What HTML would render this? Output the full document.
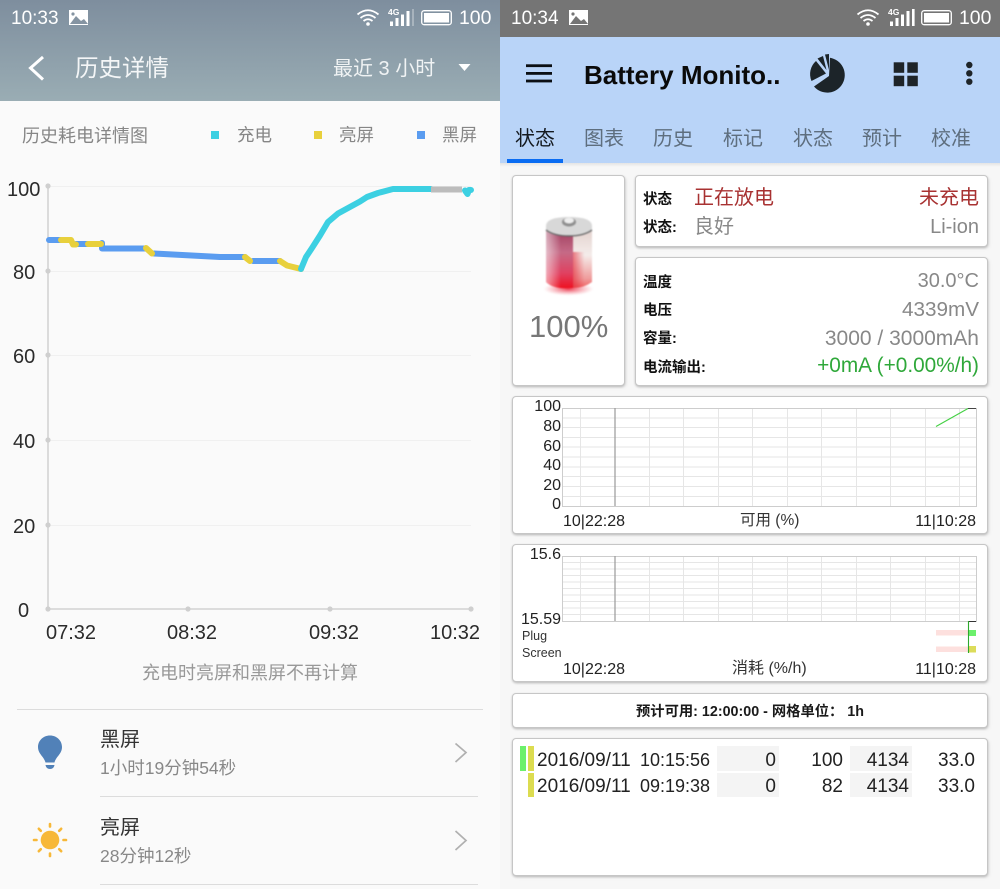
<!DOCTYPE html>
<html><head><meta charset="utf-8">
<style>
*{margin:0;padding:0;box-sizing:border-box}
html,body{width:1000px;height:889px;overflow:hidden;background:#fafafa}
body{position:relative;font-family:"Liberation Sans","Noto Sans CJK SC",sans-serif;filter:blur(.35px)}
.t{position:absolute;white-space:nowrap;line-height:1}
.r{text-align:right}
.b{position:absolute}
.card{position:absolute;background:#fff;border:1px solid #c6c6c6;border-radius:4px;box-shadow:0 1px 2px rgba(0,0,0,.22),2px 2px 3px rgba(0,0,0,.05)}
.lab{font-weight:bold;font-size:14.5px;color:#111}
svg{position:absolute;overflow:visible}
</style></head><body>

<!-- LEFT -->
<div class="b" style="left:0;top:0;width:500px;height:889px;background:#fafafa"></div>
<div class="b" style="left:0;top:0;width:500px;height:101px;background:linear-gradient(#7e8e9e,#9aadb4)"></div>
<div class="t" style="left:11px;top:9px;font-size:19px;color:#fff">10:33</div>
<div class="t" style="left:459px;top:9px;font-size:19.4px;color:#fff">100</div>

<svg style="left:0;top:0" width="500" height="36">
<rect x="69" y="10" width="19" height="15" fill="#fff"/><path d="M70 24l6-8 5 5 3-2 4 5z" fill="#8594a2"/><circle cx="73" cy="14" r="1.6" fill="#8594a2"/>
<g fill="none" stroke="#fff" stroke-width="1.8"><path d="M357.500 14.500q10.500-8.500 21 0M360.500 18q7.500-6 15 0M363.500 21q4.500-3.500 9 0"/></g><circle cx="368" cy="24" r="1.800" fill="#fff"/>
<text x="388" y="15" font-size="8.500" font-weight="bold" fill="#fff" font-family="Liberation Sans">4G</text>
<g fill="#fff"><rect x="390" y="21.500" width="3" height="4.500"/><rect x="395.500" y="18" width="3" height="8"/><rect x="401" y="14.500" width="3" height="11.500"/><rect x="406.500" y="11" width="3" height="15"/><rect x="412" y="9" width="2" height="17" opacity=".3"/></g>
<rect x="421.700" y="10.700" width="29.600" height="14" rx="2.500" fill="none" stroke="#fff" stroke-width="1.300"/><rect x="424" y="13" width="25" height="9.500" fill="#fff"/>
</svg>

<svg style="left:0;top:0" width="500" height="101">
<path d="M43 57L30.500 68 43 79.500" fill="none" stroke="#fff" stroke-width="3"/>
<path d="M458.500 64h12l-6 7z" fill="#fff"/>
</svg>
<div class="t" style="left:75px;top:57px;font-size:23.500px;color:#f4f6f7">历史详情</div>
<div class="t" style="left:333px;top:59px;font-size:20px;color:#f0f3f4">最近 3 小时</div>

<div class="t" style="left:22px;top:127px;font-size:18px;color:#868686">历史耗电详情图</div>
<div class="b" style="left:211px;top:131px;width:8px;height:8px;background:#3cd0e2"></div>
<div class="t" style="left:237px;top:127px;font-size:17.500px;color:#868686">充电</div>
<div class="b" style="left:314px;top:131px;width:8px;height:8px;background:#e8d03c"></div>
<div class="t" style="left:339px;top:127px;font-size:17.500px;color:#868686">亮屏</div>
<div class="b" style="left:417px;top:131px;width:8px;height:8px;background:#5a9cf0"></div>
<div class="t" style="left:442px;top:127px;font-size:17.500px;color:#868686">黑屏</div>

<svg style="left:0;top:0" width="500" height="700">
<g stroke="#f0f0f0" stroke-width="1"><path d="M48 186.500H471M48 271.500H471M48 355.500H471M48 440.500H471M48 525.500H471"/></g>
<path d="M48 186V609H471" fill="none" stroke="#d8d8d8" stroke-width="1.800"/>
<g fill="#cfcfcf"><circle cx="48" cy="186" r="2.600"/><circle cx="48" cy="271" r="2.600"/><circle cx="48" cy="355" r="2.600"/><circle cx="48" cy="440" r="2.600"/><circle cx="48" cy="525" r="2.600"/><circle cx="48" cy="609" r="2.600"/><circle cx="188" cy="609" r="2.600"/><circle cx="330" cy="609" r="2.600"/><circle cx="471" cy="609" r="2.600"/></g>
<g fill="none" stroke-width="6" stroke-linecap="round" stroke-linejoin="round">
<path stroke="#5a9cf0" d="M49 240H61M76 244H88M102 243V248.500H146M154 253.500L220 257H245M253 261H280"/>
<path stroke="#e8d03c" d="M61 240H71L73 244.500H76M88 244H101M146 248L152 253.500M245 257L250 261M280 261L287 265.500 301 269"/>
<path stroke="#3cd0e2" d="M301 269L306 257 312 248 320 235.500 328 222 338 213.500 360 201.500 367 197 378 193 393 189H431"/>
<path stroke="#bcbcbc" stroke-linecap="butt" d="M431 189.500H462"/>
<path stroke="#3cd0e2" d="M465 190.500L467.500 194 469 190 471 190"/>
</g>
</svg>

<div class="t" style="left:7px;top:179.500px;font-size:20px;color:#2b2b2b">100</div>
<div class="t" style="left:13px;top:262.500px;font-size:20px;color:#2b2b2b">80</div>
<div class="t" style="left:13px;top:346.500px;font-size:20px;color:#2b2b2b">60</div>
<div class="t" style="left:13px;top:431.500px;font-size:20px;color:#2b2b2b">40</div>
<div class="t" style="left:13px;top:516.500px;font-size:20px;color:#2b2b2b">20</div>
<div class="t" style="left:18px;top:600.500px;font-size:20px;color:#2b2b2b">0</div>
<div class="t" style="left:46px;top:623px;font-size:20px;color:#2b2b2b">07:32</div>
<div class="t" style="left:167px;top:623px;font-size:20px;color:#2b2b2b">08:32</div>
<div class="t" style="left:309px;top:623px;font-size:20px;color:#2b2b2b">09:32</div>
<div class="t" style="left:430px;top:623px;font-size:20px;color:#2b2b2b">10:32</div>
<div class="t" style="left:142px;top:664px;font-size:18px;color:#989898">充电时亮屏和黑屏不再计算</div>

<div class="b" style="left:17px;top:709px;width:466px;height:1px;background:#dcdcdc"></div>
<div class="b" style="left:100px;top:796px;width:378px;height:1px;background:#dcdcdc"></div>
<div class="b" style="left:100px;top:884px;width:378px;height:1px;background:#dcdcdc"></div>

<svg style="left:0;top:700px" width="500" height="189">
<path d="M50 35.500c-6.800 0-12 5.200-12 11.500 0 7 6 9.500 7.500 15.500h9c1.500-6 7.500-8.500 7.500-15.500 0-6.300-5.200-11.500-12-11.500z" fill="#5181b8"/>
<path d="M45.500 65h9c-.5 2.600-2 4-4.500 4s-4-1.400-4.500-4z" fill="#5181b8"/>
<circle cx="50" cy="140" r="9.300" fill="#f7b838"/>
<g stroke="#f7b838" stroke-width="2.600" stroke-linecap="round"><path d="M50 124v2.500M50 153.500v2.500M34 140h2.500M63.500 140h2.500M38.800 128.800l2 2M59.200 149.200l2 2M38.800 151.200l2-2M59.200 130.800l2-2"/></g>
<path d="M455.500 43.500L466 52.500 455.500 62M455.500 131L466 140.500 455.500 150" fill="none" stroke="#b0b0b0" stroke-width="1.700"/>
</svg>
<div class="t" style="left:100px;top:730px;font-size:20px;color:#333">黑屏</div>
<div class="t" style="left:100px;top:760px;font-size:17.500px;color:#888">1小时19分钟54秒</div>
<div class="t" style="left:100px;top:818px;font-size:20px;color:#333">亮屏</div>
<div class="t" style="left:100px;top:848px;font-size:17.500px;color:#888">28分钟12秒</div>

<!-- RIGHT -->
<div class="b" style="left:500px;top:0;width:500px;height:889px;background:#f7f7f7"></div>
<div class="b" style="left:500px;top:0;width:500px;height:37px;background:#757575"></div>
<div class="b" style="left:500px;top:37px;width:500px;height:126px;background:#b9d4f8"></div>
<div class="b" style="left:500px;top:163px;width:500px;height:4px;background:linear-gradient(#e4e4e4,#f7f7f7)"></div>
<div class="t" style="left:511px;top:9px;font-size:19px;color:#fff">10:34</div>
<div class="t" style="left:959px;top:9px;font-size:19.400px;color:#fff">100</div>
<svg style="left:500px;top:0" width="500" height="36">
<rect x="69" y="10" width="19" height="15" fill="#fff"/><path d="M70 24l6-8 5 5 3-2 4 5z" fill="#757575"/><circle cx="73" cy="14" r="1.600" fill="#757575"/>
<g fill="none" stroke="#fff" stroke-width="1.800"><path d="M357.500 14.500q10.500-8.500 21 0M360.500 18q7.500-6 15 0M363.500 21q4.500-3.500 9 0"/></g><circle cx="368" cy="24" r="1.800" fill="#fff"/>
<text x="388" y="15" font-size="8.500" font-weight="bold" fill="#fff" font-family="Liberation Sans">4G</text>
<g fill="#fff"><rect x="390" y="21.500" width="3" height="4.500"/><rect x="395.500" y="18" width="3" height="8"/><rect x="401" y="14.500" width="3" height="11.500"/><rect x="406.500" y="11" width="3" height="15"/><rect x="412" y="9" width="2.600" height="17"/></g>
<rect x="421.700" y="10.700" width="29.600" height="14" rx="2.500" fill="none" stroke="#fff" stroke-width="1.300"/><rect x="424" y="13" width="25" height="9.500" fill="#fff"/>
</svg>

<svg style="left:500px;top:37px" width="500" height="126">
<g fill="#0b0f14"><rect x="26" y="27.300" width="26" height="2.800"/><rect x="26" y="35" width="26" height="2.800"/><rect x="26" y="42.600" width="26" height="2.800"/></g>
<g fill="#1c2429">
<path d="M330 20.800A17.500 17.500 0 1 1 314 49.500L329 39Z"/>
<path d="M326 36.500L311.500 44A17.500 17.500 0 0 1 316 24Z"/>
<path d="M317.500 21.500L323 19 326.500 33Z"/>
<path d="M325 17.500L329 17 329 33Z"/>
</g>
<g fill="#1e2428"><rect x="393.700" y="25.300" width="10.500" height="10.500"/><rect x="407.300" y="25.300" width="10.500" height="10.500"/><rect x="393.700" y="38.700" width="10.500" height="10.500"/><rect x="407.300" y="38.700" width="10.500" height="10.500"/></g>
<g fill="#1e2428"><circle cx="469.300" cy="28" r="3.200"/><circle cx="469.300" cy="36.300" r="3.200"/><circle cx="469.300" cy="44.700" r="3.200"/></g>
</svg>
<div class="t" style="left:584px;top:62px;font-size:26px;font-weight:bold;color:#0a0a0a">Battery Monito..</div>
<div class="t" style="left:515px;top:129px;font-size:20px;color:#151a20">状态</div>
<div class="t" style="left:584px;top:129px;font-size:20px;color:#5e6e7e">图表</div>
<div class="t" style="left:653px;top:129px;font-size:20px;color:#5e6e7e">历史</div>
<div class="t" style="left:723px;top:129px;font-size:20px;color:#5e6e7e">标记</div>
<div class="t" style="left:793px;top:129px;font-size:20px;color:#5e6e7e">状态</div>
<div class="t" style="left:862px;top:129px;font-size:20px;color:#5e6e7e">预计</div>
<div class="t" style="left:931px;top:129px;font-size:20px;color:#5e6e7e">校准</div>
<div class="b" style="left:507px;top:159px;width:56px;height:4px;background:#0a6cf2"></div>

<div class="card" style="left:512px;top:175px;width:113px;height:211px"></div>
<div class="card" style="left:635px;top:175px;width:353px;height:72px"></div>
<div class="card" style="left:635px;top:257px;width:353px;height:129px"></div>
<div class="card" style="left:512px;top:396px;width:476px;height:138px"></div>
<div class="card" style="left:512px;top:544px;width:476px;height:138px"></div>
<div class="card" style="left:512px;top:693px;width:476px;height:35px"></div>
<div class="card" style="left:512px;top:738px;width:476px;height:138px"></div>

<svg style="left:540px;top:212px;filter:blur(.8px)" width="60" height="90">
<defs>
<linearGradient id="bg1" x1="0" y1="0" x2="0" y2="1"><stop offset="0" stop-color="#9c3a5c"/><stop offset=".4" stop-color="#c56a86"/><stop offset=".75" stop-color="#e04060"/><stop offset="1" stop-color="#ee1020"/></linearGradient>
<linearGradient id="bg2" x1="0" y1="0" x2="1" y2="0"><stop offset="0" stop-color="#fff" stop-opacity=".55"/><stop offset=".55" stop-color="#fff" stop-opacity="0"/></linearGradient>
<linearGradient id="bg3" x1="0" y1="0" x2="0" y2="1"><stop offset="0" stop-color="#e2d0cc"/><stop offset=".45" stop-color="#f4ecea"/><stop offset=".85" stop-color="#ef9a9a"/><stop offset="1" stop-color="#f06060"/></linearGradient>
<linearGradient id="bg5" x1="0" y1="0" x2="1" y2="0"><stop offset="0" stop-color="#e01828" stop-opacity=".55"/><stop offset=".6" stop-color="#e01828" stop-opacity="0"/></linearGradient>
<radialGradient id="bg4"><stop offset="0" stop-color="#e8102a" stop-opacity=".8"/><stop offset="1" stop-color="#f06070" stop-opacity="0"/></radialGradient>
</defs>
<ellipse cx="28.500" cy="77" rx="25" ry="6.500" fill="url(#bg4)"/>
<path d="M6 16H33V76Q14 78 6 70z" fill="url(#bg1)"/>
<path d="M6 16H33V76Q14 78 6 70z" fill="url(#bg2)"/>
<path d="M33 16H52V70Q44 76 33 76z" fill="url(#bg3)"/>
<path d="M33 40H52V70Q44 76 33 76z" fill="url(#bg5)"/>
<path d="M6 14Q6 5 29 5T52 14V19Q46 24 29 24T6 19z" fill="#d8d8d8"/>
<path d="M6 18Q14 24 29 24T52 18" fill="none" stroke="#666" stroke-width="1.400"/>
<ellipse cx="29" cy="10" rx="7" ry="4.500" fill="#8e8e8e"/><ellipse cx="29" cy="8.500" rx="5" ry="3" fill="#eee"/>
</svg>
<div class="t" style="left:529px;top:311px;font-size:31px;color:#777">100%</div>

<div class="t lab" style="left:643px;top:193px">状态</div>
<div class="t lab" style="left:643px;top:221px">状态:</div>
<div class="t" style="left:694px;top:188px;font-size:20px;color:#a83232">正在放电</div>
<div class="t r" style="right:21px;top:188px;font-size:20px;color:#a83232">未充电</div>
<div class="t" style="left:694px;top:217px;font-size:20px;color:#888">良好</div>
<div class="t r" style="right:21px;top:217px;font-size:20px;color:#888">Li-ion</div>

<div class="t lab" style="left:643px;top:276px">温度</div>
<div class="t lab" style="left:643px;top:304px">电压</div>
<div class="t lab" style="left:643px;top:332px">容量:</div>
<div class="t lab" style="left:643px;top:361px">电流输出:</div>
<div class="t r" style="right:21px;top:271px;font-size:20px;color:#888">30.0°C</div>
<div class="t r" style="right:21px;top:300px;font-size:20.700px;color:#888">4339mV</div>
<div class="t r" style="right:21px;top:328px;font-size:21px;color:#888">3000 / 3000mAh</div>
<div class="t r" style="right:21px;top:356px;font-size:20.800px;color:#2fa83a">+0mA (+0.00%/h)</div>

<svg style="left:0;top:0" width="1000" height="889">
<g stroke="#e6e6e6" stroke-width="1" fill="none">
<path d="M563 418H976M563 427.500H976M563 437.500H976M563 447H976M563 457H976M563 467H976M563 476.500H976M563 486.500H976M563 496.500H976"/>
<path d="M580.500 408V506M649.500 408V506M683.500 408V506M718.500 408V506M752.500 408V506M787.500 408V506M821.500 408V506M856.500 408V506M890.500 408V506M925.500 408V506M959.500 408V506"/>
<path d="M563 562.500H976M563 569H976M563 575.500H976M563 582H976M563 588.500H976M563 595H976M563 601.500H976M563 608H976M563 614.500H976"/>
<path d="M580.500 556V621M649.500 556V621M683.500 556V621M718.500 556V621M752.500 556V621M787.500 556V621M821.500 556V621M856.500 556V621M890.500 556V621M925.500 556V621M959.500 556V621"/>
</g>
<rect x="562.500" y="408.500" width="414" height="98" fill="none" stroke="#cdcdcd"/>
<rect x="562.500" y="556.500" width="414" height="65" fill="none" stroke="#cdcdcd"/>
<path d="M615 408V506M615 556V621" stroke="#9a9a9a" stroke-width="1.200"/>
<path d="M936 426.500L968 408.500" stroke="#44d044" stroke-width="1.100" fill="none"/>
<path d="M968 408.500H976" stroke="#444" stroke-width="1"/>
<path d="M968 621.500H976" stroke="#333" stroke-width="1"/>
<rect x="936" y="630" width="32" height="5.500" fill="#fde0de"/>
<rect x="936" y="646.500" width="32" height="5.500" fill="#fde0de"/>
<rect x="968" y="630" width="8" height="6" fill="#6cf06c"/>
<rect x="968" y="646" width="8" height="6.500" fill="#dcdc5a"/>
<path d="M968.500 621V653" stroke="#2ea82e" stroke-width="1.100"/>
</svg>

<div class="t r" style="right:439px;top:399px;font-size:16px;color:#222">100</div>
<div class="t r" style="right:439px;top:419px;font-size:16px;color:#222">80</div>
<div class="t r" style="right:439px;top:438.500px;font-size:16px;color:#222">60</div>
<div class="t r" style="right:439px;top:458px;font-size:16px;color:#222">40</div>
<div class="t r" style="right:439px;top:478px;font-size:16px;color:#222">20</div>
<div class="t r" style="right:439px;top:497px;font-size:16px;color:#222">0</div>
<div class="t" style="left:563px;top:514px;font-size:16px;color:#222">10|22:28</div>
<div class="t" style="left:740px;top:513px;font-size:15.500px;color:#333">可用 (%)</div>
<div class="t r" style="right:24px;top:514px;font-size:16px;color:#222">11|10:28</div>

<div class="t r" style="right:439px;top:547px;font-size:16px;color:#222">15.6</div>
<div class="t r" style="right:439px;top:612px;font-size:16px;color:#222">15.59</div>
<div class="t" style="left:522px;top:630px;font-size:12.500px;color:#333">Plug</div>
<div class="t" style="left:522px;top:647px;font-size:12.500px;color:#333">Screen</div>
<div class="t" style="left:563px;top:662px;font-size:16px;color:#222">10|22:28</div>
<div class="t" style="left:732px;top:661px;font-size:16px;color:#333">消耗 (%/h)</div>
<div class="t r" style="right:24px;top:662px;font-size:16px;color:#222">11|10:28</div>

<div class="t" style="left:636px;top:705px;font-size:14.300px;font-weight:bold;color:#1a1a1a">预计可用: 12:00:00 - 网格单位： 1h</div>

<div class="b" style="left:520px;top:746px;width:6px;height:25px;background:#6cf06c"></div>
<div class="b" style="left:528px;top:746px;width:6px;height:25px;background:#dcdc50"></div>
<div class="b" style="left:528px;top:773px;width:6px;height:24px;background:#dcdc50"></div>
<div class="b" style="left:717px;top:746px;width:62px;height:25px;background:#f4f4f4"></div>
<div class="b" style="left:717px;top:773px;width:62px;height:24px;background:#f4f4f4"></div>
<div class="b" style="left:849.500px;top:746px;width:62px;height:25px;background:#f4f4f4"></div>
<div class="b" style="left:849.500px;top:773px;width:62px;height:24px;background:#f4f4f4"></div>
<div class="t" style="left:537px;top:751px;font-size:19px;color:#222">2016/09/11</div>
<div class="t" style="left:640px;top:751px;font-size:18px;color:#222">10:15:56</div>
<div class="t" style="left:537px;top:777px;font-size:19px;color:#222">2016/09/11</div>
<div class="t" style="left:640px;top:777px;font-size:18px;color:#222">09:19:38</div>
<div class="t r" style="right:224px;top:751px;font-size:19px;color:#222">0</div>
<div class="t r" style="right:157px;top:751px;font-size:19px;color:#222">100</div>
<div class="t r" style="right:91px;top:751px;font-size:19px;color:#222">4134</div>
<div class="t r" style="right:25px;top:751px;font-size:19px;color:#222">33.0</div>
<div class="t r" style="right:224px;top:777px;font-size:19px;color:#222">0</div>
<div class="t r" style="right:157px;top:777px;font-size:19px;color:#222">82</div>
<div class="t r" style="right:91px;top:777px;font-size:19px;color:#222">4134</div>
<div class="t r" style="right:25px;top:777px;font-size:19px;color:#222">33.0</div>

</body></html>
